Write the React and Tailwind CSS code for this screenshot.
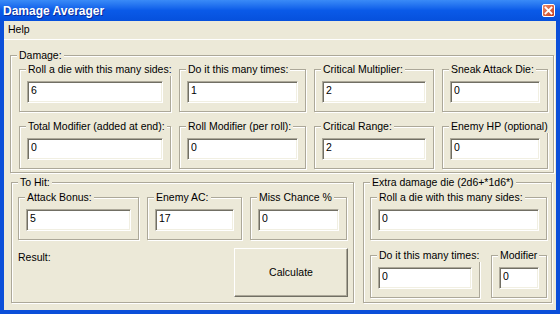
import React from 'react';

const face = 'bg-[#ECE9D8]';

function Group({ title, className = '', children }) {
    return (
        <fieldset className={`m-0 p-0 min-w-0 border border-[#ACA899] shadow-[inset_1px_1px_0_#fff,1px_1px_0_#fff] ${className}`}>
            <legend className={`ml-[6px] px-[2px] leading-[13px] whitespace-nowrap ${face}`}>{title}</legend>
            {children}
        </fieldset>
    );
}

function TextBox({ value }) {
    return (
        <input
            defaultValue={value}
            className="block w-full h-[22px] bg-white border border-t-[#ACA899] border-l-[#ACA899] border-b-white border-r-white shadow-[inset_1px_1px_0_#716F64,inset_-1px_-1px_0_#F1EFE2] pl-[3px] pt-[1px] pb-[6px] leading-[13px] outline-none"
        />
    );
}

// small group with a single text box inside
function Field({ label, value, width }) {
    return (
        <Group title={label} className={width}>
            <div className="px-[7px] pt-[5px] pb-[8px]">
                <TextBox value={value} />
            </div>
        </Group>
    );
}

export default function App() {
    return (
        <div className="w-[560px] h-[314px] flex flex-col bg-[#0B4FD9] font-['Liberation_Sans',Arial,sans-serif] text-[10.5px] text-black">
            {/* title bar */}
            <div className="h-[21px] flex items-center justify-between pl-[3px] pr-[5px] bg-gradient-to-b from-[#3A8BF7] via-[#0A5AE8] to-[#0650DC]">
                <span className="text-white font-bold text-[12px] leading-none [text-shadow:1px_1px_0_#0A2A9A]">Damage Averager</span>
                <div className="w-[13px] h-[13px] rounded-[2px] border border-white bg-gradient-to-br from-[#EE8A6A] to-[#C53E1C] flex items-center justify-center">
                    <svg width="9" height="9" viewBox="0 0 9 9">
                        <path d="M1.5 1.5 L7.5 7.5 M7.5 1.5 L1.5 7.5" stroke="#fff" strokeWidth="1.8" strokeLinecap="square" />
                    </svg>
                </div>
            </div>

            <div className={`flex-1 mx-[4px] mb-[4px] ${face} flex flex-col`}>
                {/* menu */}
                <div className="h-[19px] flex items-center pl-[4px] border-b border-white">
                    <span>Help</span>
                </div>

                <div className="pl-[6px] pt-[9px]">
                    <Group title="Damage:" className="w-[544px]">
                        <div className="flex flex-col gap-[8px] pl-[8px] pt-[1px] pb-[3px]">
                            <div className="flex gap-[8px]">
                                <Field label="Roll a die with this many sides:" value="6" width="w-[152px]" />
                                <Field label="Do it this many times:" value="1" width="w-[127px]" />
                                <Field label="Critical Multiplier:" value="2" width="w-[120px]" />
                                <Field label="Sneak Attack Die:" value="0" width="w-[106px]" />
                            </div>
                            <div className="flex gap-[8px]">
                                <Field label="Total Modifier (added at end):" value="0" width="w-[152px]" />
                                <Field label="Roll Modifier (per roll):" value="0" width="w-[127px]" />
                                <Field label="Critical Range:" value="2" width="w-[120px]" />
                                <Field label="Enemy HP (optional)" value="0" width="w-[106px]" />
                            </div>
                        </div>
                    </Group>

                    <div className="flex gap-[9px] mt-[3px] ml-[1px]">
                        <Group title="To Hit:" className="w-[343px]">
                            <div className="pl-[6px] pr-[5px] pt-[2px] pb-[5px]">
                                <div className="flex gap-[8px]">
                                    <Field label="Attack Bonus:" value="5" width="w-[121px]" />
                                    <Field label="Enemy AC:" value="17" width="w-[95px]" />
                                    <Field label="Miss Chance %" value="0" width="w-[97px]" />
                                </div>
                                <div className="flex items-start mt-[8px]">
                                    <span className="mt-[2px]">Result:</span>
                                    <button className={`ml-auto w-[114px] h-[49px] ${face} border border-t-white border-l-white border-b-[#716F64] border-r-[#716F64] shadow-[inset_-1px_-1px_0_#ACA899]`}>
                                        Calculate
                                    </button>
                                </div>
                            </div>
                        </Group>

                        <Group title="Extra damage die (2d6+*1d6*)" className="w-[189px]">
                            <div className="flex flex-col gap-[9px] pl-[6px] pt-[2px] pb-[4px]">
                                <Field label="Roll a die with this many sides:" value="0" width="w-[177px]" />
                                <div className="flex gap-[11px]">
                                    <Field label="Do it this many times:" value="0" width="w-[110px]" />
                                    <Field label="Modifier" value="0" width="w-[56px]" />
                                </div>
                            </div>
                        </Group>
                    </div>
                </div>
            </div>
        </div>
    );
}
